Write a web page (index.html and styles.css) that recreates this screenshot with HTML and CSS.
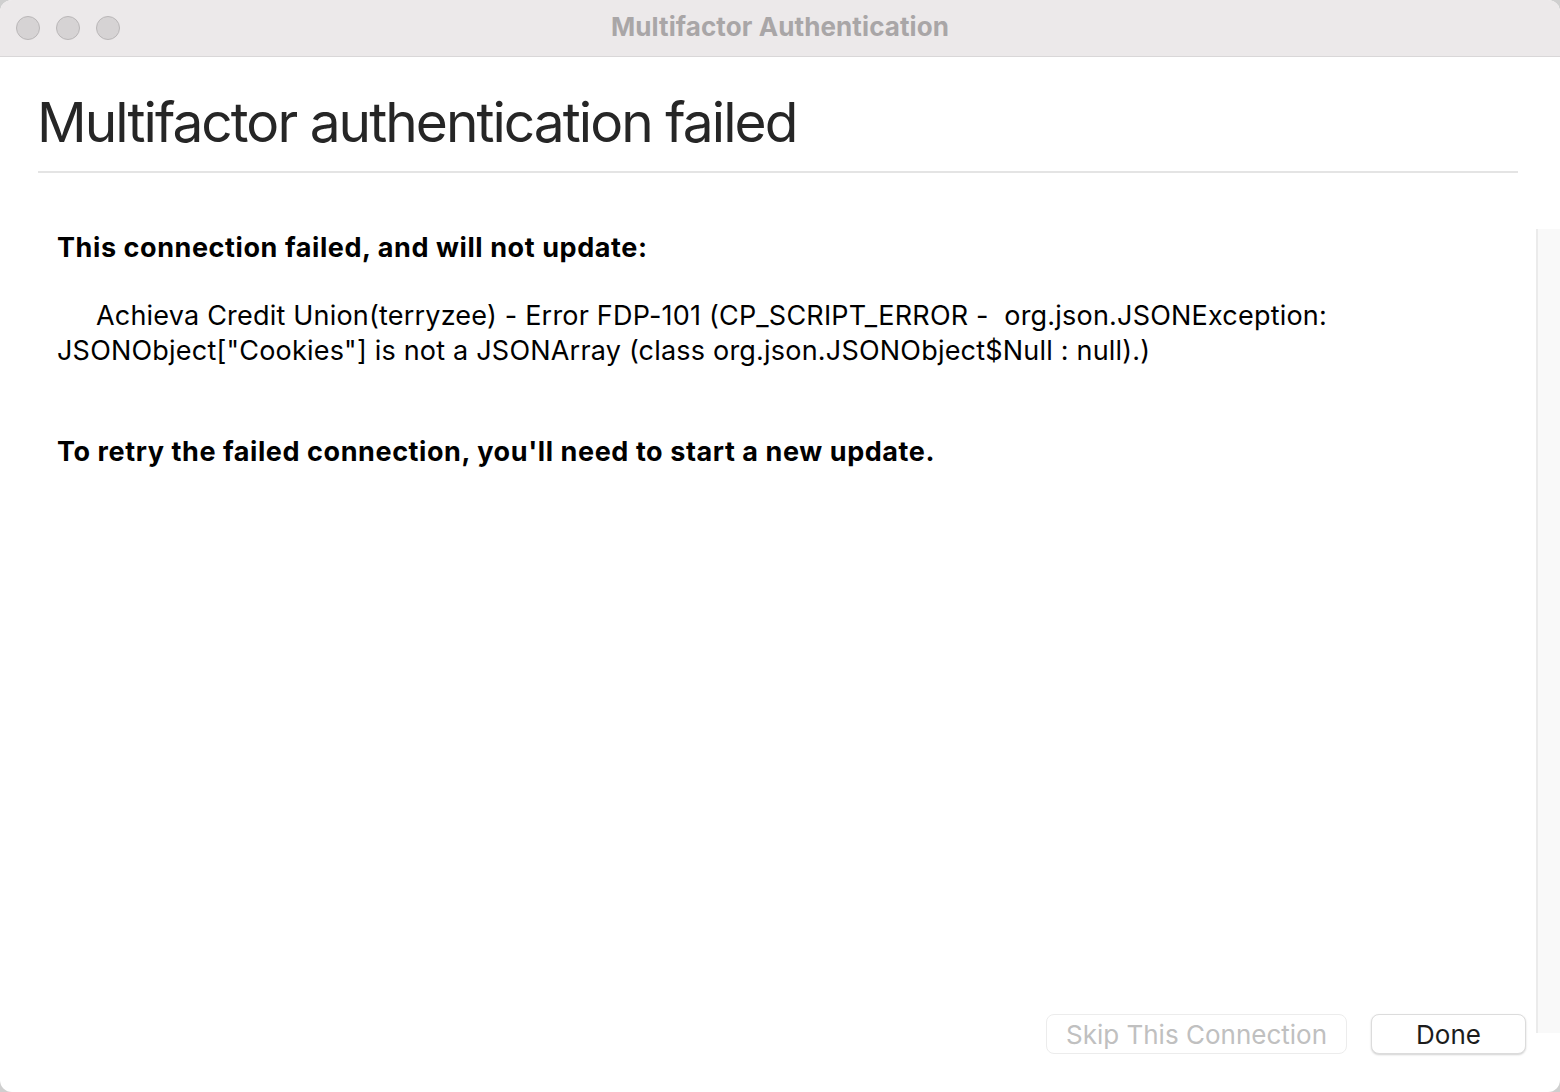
FILE: index.html
```html
<!DOCTYPE html>
<html>
<head>
<meta charset="utf-8">
<link rel="stylesheet" href="styles.css">
</head>
<body>
<div class="window">
  <div class="titlebar">
    <div class="lights">
      <span class="light"></span><span class="light"></span><span class="light"></span>
    </div>
    <div class="title">Multifactor Authentication</div>
  </div>
  <div class="header">
    <h1 class="heading">Multifactor authentication failed</h1>
    <div class="rule"></div>
  </div>
  <div class="main">
    <div class="column">
      <div class="text">
        <p class="lead">This connection failed, and will not update:</p>
        <p class="error">&nbsp;&nbsp;&nbsp;&nbsp;&nbsp;Achieva Credit Union(terryzee) - Error FDP-101 (CP_SCRIPT_ERROR - &nbsp;org.json.JSONException:<br>JSONObject["Cookies"] is not a JSONArray (class org.json.JSONObject$Null : null).)</p>
        <p class="retry">To retry the failed connection, you'll need to start a new update.</p>
      </div>
      <div class="actions">
        <button class="btn btn-disabled">Skip This Connection</button>
        <button class="btn btn-done">Done</button>
      </div>
    </div>
    <div class="track"></div>
  </div>
</div>
</body>
</html>
```
FILE: styles.css
```css
html, body {
  margin: 0;
  padding: 0;
  height: 100%;
  background: #cfcfcf;
}
body {
  font-family: Inter, "Noto Sans", sans-serif;
}
.window {
  height: 1092px;
  width: 1560px;
  box-sizing: border-box;
  background: #ffffff;
  border-radius: 12px;
  overflow: hidden;
  display: flex;
  flex-direction: column;
}
.titlebar {
  height: 56px;
  flex: none;
  background: #ece9ea;
  border-bottom: 1px solid #d9d7d8;
  display: flex;
  align-items: center;
  position: relative;
}
.lights {
  display: flex;
  gap: 16px;
  padding-left: 16px;
}
.light {
  width: 24px;
  height: 24px;
  border-radius: 50%;
  background: #d6d3d4;
  border: 1px solid #bab7b8;
  box-sizing: border-box;
}
.title {
  position: absolute;
  left: 0;
  right: 0;
  text-align: center;
  font-weight: 700;
  font-size: 26px;
  color: #a9a6a7;
  top: 11px;
  letter-spacing: 0.1px;
}
.header {
  padding: 31px 42px 0 37px;
}
.heading {
  margin: 0;
  font-weight: 400;
  font-size: 55px;
  line-height: 68px;
  color: #262626;
  letter-spacing: -1.95px;
}
.rule {
  margin-top: 15px;
  margin-left: 1px;
  height: 2px;
  background: #e4e4e4;
}
.main {
  flex: 1;
  display: flex;
}
.column {
  flex: 1;
  display: flex;
  flex-direction: column;
}
.text {
  flex: 1;
  padding: 57px 0 0 57px;
  font-size: 27px;
  line-height: 35px;
  color: #000;
  letter-spacing: 0.2px;
}
.text p {
  margin: 0;
}
.lead, .retry {
  font-weight: 700;
  letter-spacing: 0.58px;
}
.error {
  margin-top: 33px !important;
}
.retry {
  margin-top: 66px !important;
}
.actions {
  display: flex;
  justify-content: flex-end;
  gap: 24px;
  padding: 0 10px 38px 0;
}
.btn {
  font-family: Inter, "Noto Sans", sans-serif;
  font-size: 26px;
  height: 40px;
  border-radius: 8px;
  background: #fff;
  padding: 0;
}
.btn-disabled {
  width: 301px;
  color: #c0c0c0;
  border: 1px solid #ececec;
}
.btn-done {
  width: 155px;
  color: #1c1c1c;
  border: 1px solid #dcdcdc;
  box-shadow: 0 1px 2px rgba(0,0,0,0.18);
}
.track {
  width: 24px;
  flex: none;
  margin-top: 56px;
  margin-bottom: 59px;
  background: #f9f9f9;
  border-left: 2px solid #ebebeb;
  box-sizing: border-box;
}
```
